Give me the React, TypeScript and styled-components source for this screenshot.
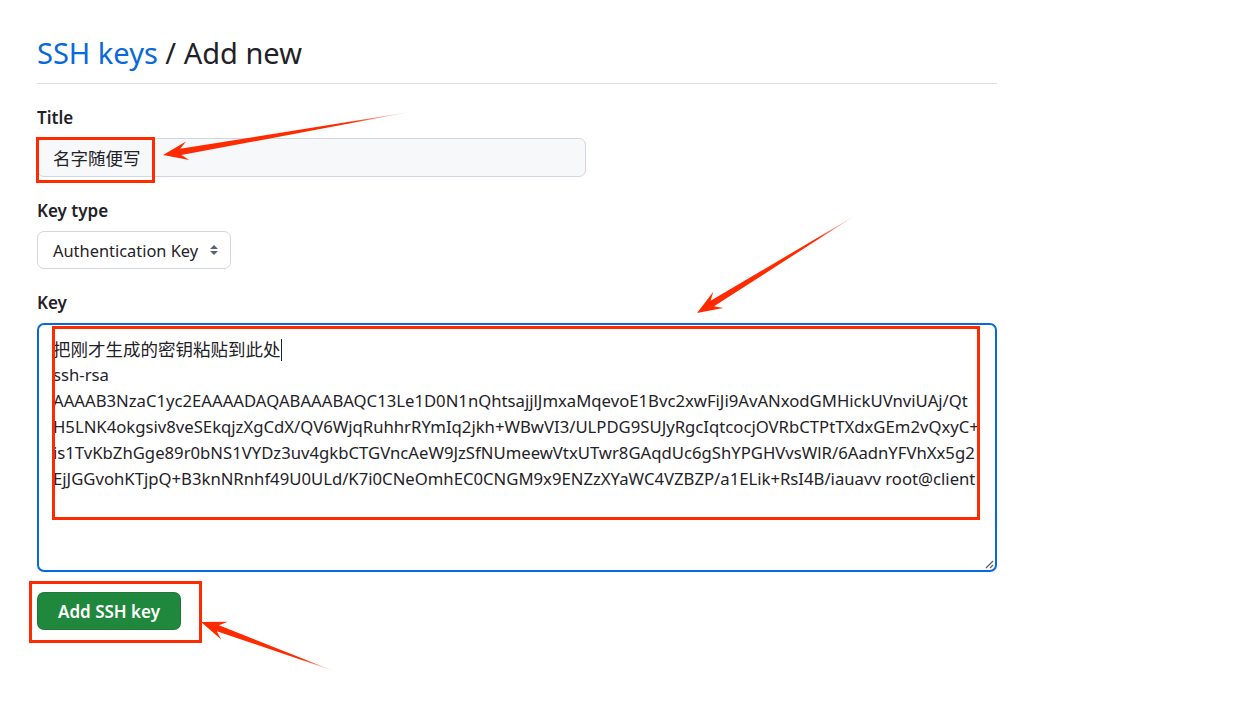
import React from "react";
import styled, { createGlobalStyle } from "styled-components";

const colors = {
    text: "#1f2328",
    link: "#0969da",
    border: "#d0d7de",
    divider: "#d8dee4",
    inputBg: "#f6f8fa",
    muted: "#59636e",
    green: "#1f883d",
    mark: "#fe2a00",
};

const keyLines = [
    "ssh-rsa",
    "AAAAB3NzaC1yc2EAAAADAQABAAABAQC13Le1D0N1nQhtsajjlJmxaMqevoE1Bvc2xwFiJi9AvANxodGMHickUVnviUAj/Qt",
    "H5LNK4okgsiv8veSEkqjzXgCdX/QV6WjqRuhhrRYmIq2jkh+WBwVI3/ULPDG9SUJyRgcIqtcocjOVRbCTPtTXdxGEm2vQxyC+",
    "is1TvKbZhGge89r0bNS1VYDz3uv4gkbCTGVncAeW9JzSfNUmeewVtxUTwr8GAqdUc6gShYPGHVvsWlR/6AadnYFVhXx5g2",
    "EjJGGvohKTjpQ+B3knNRnhf49U0ULd/K7i0CNeOmhEC0CNGM9x9ENZzXYaWC4VZBZP/a1ELik+RsI4B/iauavv root@client",
];

// annotation arrows: tail -> tip, in page pixels
const arrows = [
    { tx: 410, ty: 112, hx: 163, hy: 155 },
    { tx: 856, ty: 215, hx: 697, hy: 313 },
    { tx: 334, ty: 671, hx: 201, hy: 622 },
];

// annotation boxes (outer edges)
const boxes = [
    { x: 36, y: 137, w: 119, h: 46 },
    { x: 52, y: 326, w: 928, h: 194 },
    { x: 29, y: 581, w: 173, h: 62 },
];

const arrowPoints = (tx: number, ty: number, hx: number, hy: number) => {
    const dx = hx - tx;
    const dy = hy - ty;
    const len = Math.hypot(dx, dy);
    const ux = dx / len;
    const uy = dy / len;
    const nx = -uy;
    const ny = ux;
    const headLen = 25;
    const headW = 9.5;
    const neckW = 3.2;
    const bx = hx - ux * headLen * 0.72;
    const by = hy - uy * headLen * 0.72;
    const cx = hx - ux * headLen;
    const cy = hy - uy * headLen;
    const pts = [
        [tx, ty],
        [bx + nx * neckW, by + ny * neckW],
        [cx + nx * headW, cy + ny * headW],
        [hx, hy],
        [cx - nx * headW, cy - ny * headW],
        [bx - nx * neckW, by - ny * neckW],
    ];
    return pts.map((p) => p.map((v) => v.toFixed(1)).join(",")).join(" ");
};

const App = () => {
    return (
        <Page>
            <GlobalStyle />
            <Content>
                <Subhead>
                    <Heading>
                        <HeadLink href="#">SSH keys</HeadLink> / Add new
                    </Heading>
                </Subhead>

                <FormGroup>
                    <Label>Title</Label>
                    <TextInput type="text" defaultValue="名字随便写" />
                </FormGroup>

                <FormGroup>
                    <Label>Key type</Label>
                    <Select>
                        <span>Authentication Key</span>
                        <svg width="10" height="12" viewBox="0 0 10 12">
                            <path d="M5 1 L9 5 H1 Z" fill={colors.muted} />
                            <path d="M5 11 L9 7 H1 Z" fill={colors.muted} />
                        </svg>
                    </Select>
                </FormGroup>

                <FormGroup>
                    <Label>Key</Label>
                    <KeyArea>
                        <HintLine>
                            把刚才生成的密钥粘贴到此处
                            <Caret />
                        </HintLine>
                        {keyLines.map((line) => (
                            <KeyLine key={line}>{line}</KeyLine>
                        ))}
                        <Grip width="10" height="10" viewBox="0 0 10 10">
                            <path d="M9 2 L2 9 M9 6 L6 9" stroke="#57606a" strokeWidth="1.2" />
                        </Grip>
                    </KeyArea>
                </FormGroup>

                <SubmitButton type="button">Add SSH key</SubmitButton>
            </Content>

            <Overlay width="1251" height="723" viewBox="0 0 1251 723">
                <defs>
                    {arrows.map((a, i) => (
                        <linearGradient
                            key={i}
                            id={`fade${i}`}
                            gradientUnits="userSpaceOnUse"
                            x1={a.tx}
                            y1={a.ty}
                            x2={a.tx + (a.hx - a.tx) * 0.25}
                            y2={a.ty + (a.hy - a.ty) * 0.25}
                        >
                            <stop offset="0" stopColor={colors.mark} stopOpacity="0.1" />
                            <stop offset="1" stopColor={colors.mark} stopOpacity="1" />
                        </linearGradient>
                    ))}
                </defs>
                {boxes.map((b, i) => (
                    <rect
                        key={i}
                        x={b.x + 1.5}
                        y={b.y + 1.5}
                        width={b.w - 3}
                        height={b.h - 3}
                        fill="none"
                        stroke={colors.mark}
                        strokeWidth="3"
                    />
                ))}
                {arrows.map((a, i) => (
                    <polygon key={i} points={arrowPoints(a.tx, a.ty, a.hx, a.hy)} fill={`url(#fade${i})`} />
                ))}
            </Overlay>
        </Page>
    );
};

export default App;

const GlobalStyle = createGlobalStyle`
    html, body {
        margin: 0;
        padding: 0;
        background: #ffffff;
    }
    body {
        font-family: "Noto Sans", "Noto Sans CJK SC", sans-serif;
        color: ${colors.text};
    }
`;

const Page = styled.div`
    position: relative;
    min-height: 723px;
    overflow: hidden;
`;

const Content = styled.div`
    width: 960px;
    padding: 30px 0 0 37px;
`;

const Subhead = styled.div`
    padding-bottom: 8px;
    border-bottom: 1px solid ${colors.divider};
`;

const Heading = styled.h1`
    margin: 0;
    font-size: 29px;
    font-weight: 400;
    line-height: 45px;
    color: ${colors.text};
`;

const HeadLink = styled.a`
    color: ${colors.link};
    text-decoration: none;
`;

const FormGroup = styled.div`
    margin-top: 21px;
    display: flex;
    flex-direction: column;
    align-items: flex-start;
`;

const Label = styled.label`
    font-size: 17px;
    font-weight: 600;
    line-height: 25px;
    margin-bottom: 8px;
`;

const TextInput = styled.input`
    box-sizing: border-box;
    width: 549px;
    height: 39px;
    padding: 0 15px;
    font-family: "Noto Sans", "Noto Sans CJK SC", sans-serif;
    font-size: 17.5px;
    color: ${colors.text};
    background: ${colors.inputBg};
    border: 1px solid ${colors.border};
    border-radius: 7px;
    outline: none;
`;

const Select = styled.div`
    box-sizing: border-box;
    height: 38px;
    display: flex;
    align-items: center;
    gap: 11px;
    padding: 0 11px 0 15px;
    font-size: 16.4px;
    border: 1px solid ${colors.border};
    border-radius: 7px;
    background: #ffffff;
`;

const KeyArea = styled.div`
    position: relative;
    box-sizing: border-box;
    width: 960px;
    height: 249px;
    padding: 11px 14px 10px;
    border: 2px solid ${colors.link};
    border-radius: 7px;
    font-size: 16.7px;
`;

const KeyLine = styled.div`
    line-height: 26px;
    white-space: pre;
`;

const HintLine = styled(KeyLine)`
    font-size: 17.5px;
`;

const Caret = styled.span`
    display: inline-block;
    width: 1px;
    height: 22px;
    background: ${colors.text};
    vertical-align: -5px;
`;

const Grip = styled.svg`
    position: absolute;
    right: 1px;
    bottom: 1px;
`;

const SubmitButton = styled.button`
    margin-top: 20px;
    height: 38px;
    padding: 0 20px;
    font-family: "Noto Sans", sans-serif;
    font-size: 17px;
    font-weight: 600;
    color: #ffffff;
    background: ${colors.green};
    border: 1px solid rgba(31, 35, 40, 0.15);
    border-radius: 7px;
    cursor: pointer;
`;

const Overlay = styled.svg`
    position: absolute;
    top: 0;
    left: 0;
    pointer-events: none;
`;
